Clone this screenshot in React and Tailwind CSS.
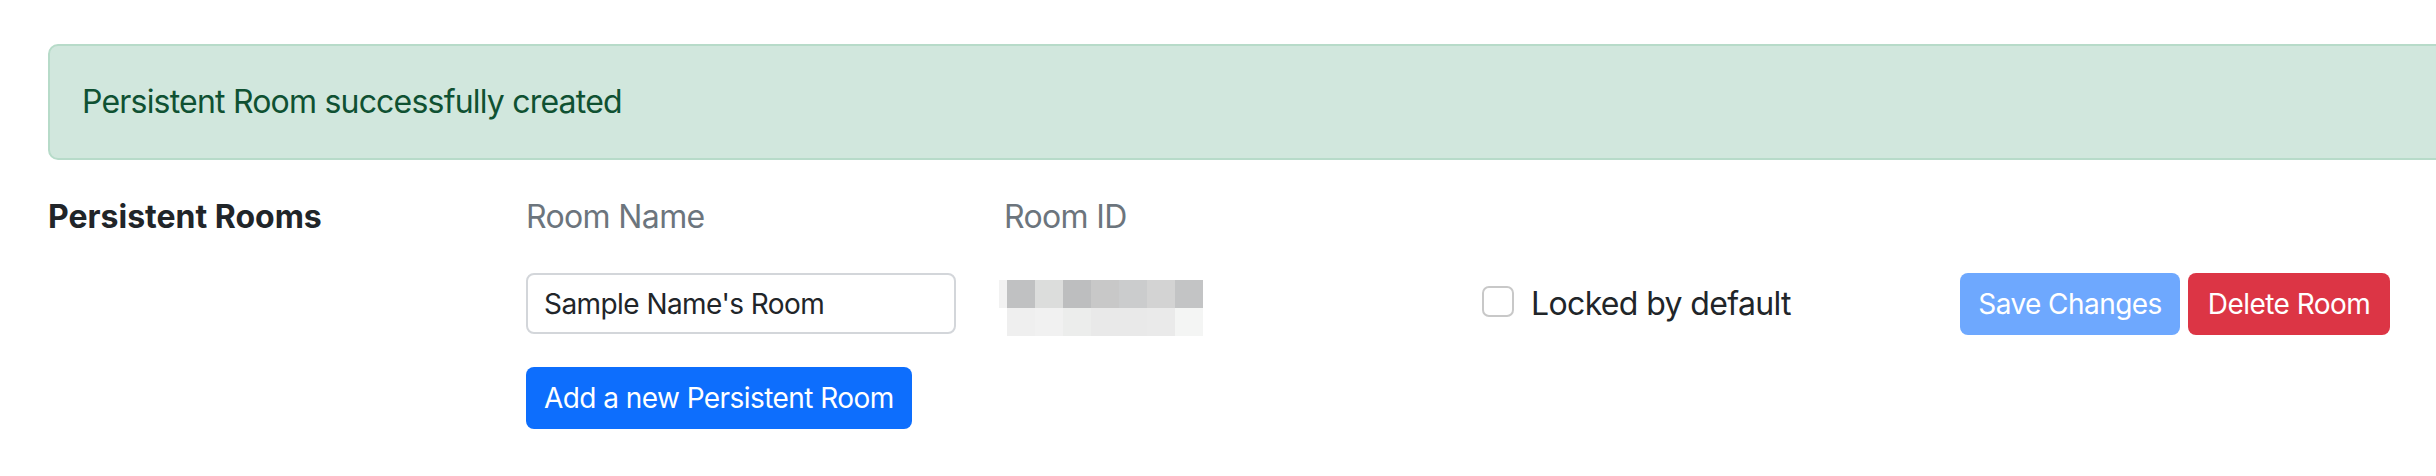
import React from "react";

const topCells = ["#c0c1c2", "#dcdddc", "#bdbebf", "#c8c8c8", "#cbcccd", "#d3d3d3", "#c3c4c5"];
const bottomCells = ["#efefef", "#f1f1f1", "#ecedec", "#e9e9e9", "#e9e9e9", "#eaeaea", "#f4f5f4"];

function BlurredId() {
  return (
    <div className="flex flex-col -ml-[5px] mt-[7px]">
      <div className="flex h-[28px]">
        <div className="w-[8px] h-[28px] bg-[#f2f2f2]" />
        {topCells.map((c, i) => (
          <div key={i} className="w-[28px] h-[28px]" style={{ backgroundColor: c }} />
        ))}
      </div>
      <div className="flex h-[28px] pl-[8px]">
        {bottomCells.map((c, i) => (
          <div key={i} className="w-[28px] h-[28px]" style={{ backgroundColor: c }} />
        ))}
      </div>
    </div>
  );
}

export default function App() {
  return (
    <div className="w-full h-[476px] overflow-hidden bg-white font-['Inter','Liberation_Sans',sans-serif] text-[#212529]">
      <div className="w-[2600px] pl-[48px] pt-[44px]">
        <div className="h-[116px] flex items-center px-[32px] rounded-[10px] border-2 border-[#b7dbc9] bg-[#d1e7dd] text-[#0f5132] text-[32px] tracking-[-0.025em]">
          Persistent Room successfully created
        </div>

        <div className="mt-[33px] grid grid-cols-[430px_430px_430px_430px_430px] gap-x-[48px] gap-y-[32px]">
          {/* Row 1 */}
          <div className="h-[48px] leading-[48px] text-[32px] font-bold">Persistent Rooms</div>
          <div className="h-[48px] leading-[48px] text-[32px] text-[#6c757d] tracking-[-0.02em]">Room Name</div>
          <div className="h-[48px] leading-[48px] text-[32px] text-[#6c757d] tracking-[-0.02em]">Room ID</div>
          <div />
          <div />

          {/* Row 2 */}
          <div />
          <div className="h-[61px]">
            <input
              readOnly
              value="Sample Name's Room"
              className="w-full h-[61px] border-2 border-[#d3d6da] rounded-[8px] px-[16px] text-[28px] text-[#212529] bg-white outline-none tracking-[-0.02em] font-['Inter','Liberation_Sans',sans-serif]"
            />
          </div>
          <div className="h-[61px]">
            <BlurredId />
          </div>
          <div className="h-[61px] flex items-center gap-[17px]">
            <span className="shrink-0 w-[32px] h-[31px] -mt-[4px] rounded-[7px] border-2 border-[#c8c8c8] bg-white" />
            <span className="whitespace-nowrap text-[32px] leading-[48px] tracking-[-0.02em]">Locked by default</span>
          </div>
          <div className="h-[62px] flex gap-[8px]">
            <button className="shrink-0 whitespace-nowrap h-[62px] w-[220px] rounded-[8px] bg-[#6ea8fe] text-white text-[28px] tracking-[-0.02em]">
              Save Changes
            </button>
            <button className="shrink-0 whitespace-nowrap h-[62px] w-[202px] rounded-[8px] bg-[#dc3545] text-white text-[28px] tracking-[-0.02em]">
              Delete Room
            </button>
          </div>

          {/* Row 3 */}
          <div />
          <div className="h-[62px]">
            <button className="whitespace-nowrap h-[62px] px-[18px] rounded-[8px] bg-[#0d6efd] text-white text-[28px] tracking-[-0.02em]">
              Add a new Persistent Room
            </button>
          </div>
          <div />
          <div />
          <div />
        </div>
      </div>
    </div>
  );
}
